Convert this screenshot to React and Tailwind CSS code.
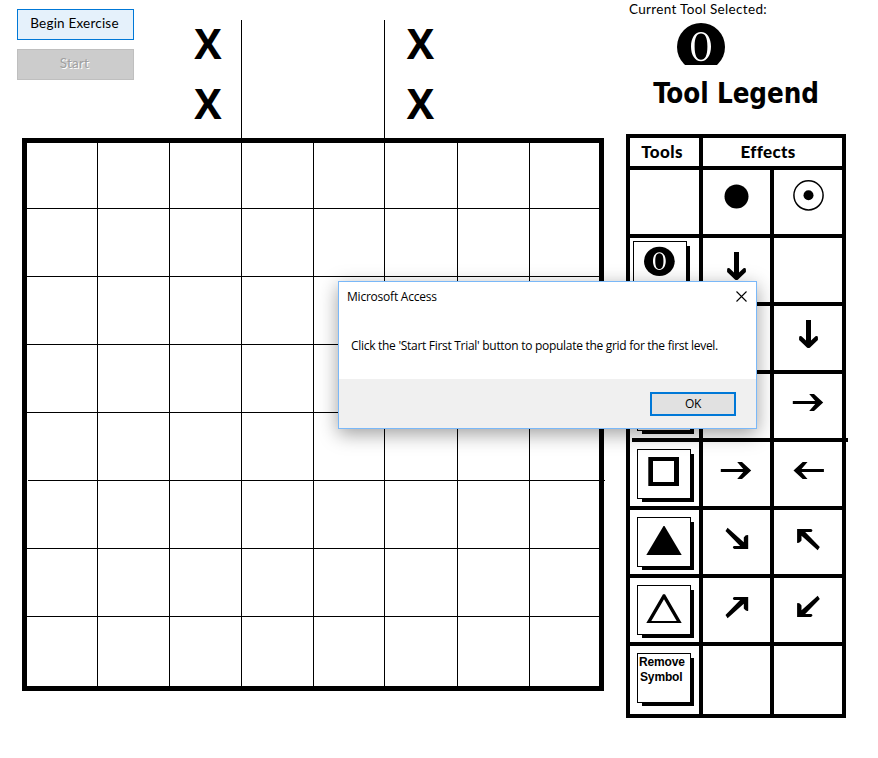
import React from "react";

const COLUMNS = [71, 72, 72, 72, 71, 73, 72, 69];
const ROWS = [66, 68, 68, 68, 68, 68, 68, 69];

function Mark() {
  return (
    <div className="h-[60px] text-center font-['Open_Sans','Noto_Sans',sans-serif] text-[41px] leading-[60px] font-bold">
      <span className="inline-block">X</span>
    </div>
  );
}

function Glyph({ children, w = 67, h = 64 }) {
  return (
    <svg className="block shrink-0" width={w} height={h} viewBox={`0 0 ${w} ${h}`}>
      {children}
    </svg>
  );
}

const Down = ({ x }) => (
  <path
    transform={`translate(${x} 14)`}
    d="M-2.5 0H2.5V20.5L7 16.3Q9.3 15.6 9.4 17.5V20L1.6 27.6Q0 28.6 -1.6 27.6L-9.4 20V17.5Q-9.3 15.6 -7 16.3L-2.5 20.5Z"
  />
);

const Side = ({ x, flip }) => (
  <path
    transform={`translate(${x} 28.5) scale(${flip ? -1 : 1} 1)`}
    d="M-15.2 -1.5H7.2L1.2 -8.5H6L15.2 0L6 8.5H1.2L7.2 1.5H-15.2Z"
  />
);

const Diagonal = ({ x, y, sx = 1, sy = 1 }) => (
  <path
    transform={`translate(${x} ${y}) scale(${sx} ${sy})`}
    d="M-9.3 -10.7L6.9 3.8V-1Q9 -4 11.3 -3.2V10.6H-2.5Q-5.3 9.5 -3 7.7H3.2L-11.4 -7.3Z"
  />
);

function ZeroDisc() {
  return (
    <>
      <circle cx="24" cy="24" r="24" />
      <path
        fill="white"
        fillRule="evenodd"
        d="M24 9C30 9 34 15 34 23.5S30 38.3 24 38.3S14 32 14 23.5S18 9 24 9ZM24 10.6C20 10.6 17.6 14 17.6 23.5S20 36.7 24 36.7S30.4 33 30.4 23.5S28 10.6 24 10.6Z"
      />
    </>
  );
}

function ToolButton({ shifted, children }) {
  return (
    <div
      className={`${shifted ? "mt-[3px] ml-[3px]" : "mt-[7px] ml-[7px]"} h-[50px] w-[54px] border border-black bg-white shadow-[4px_4px_0_-1px_#000]`}
    >
      {children}
    </div>
  );
}

const LEGEND = [
  [
    null,
    <Glyph><circle cx="33.5" cy="26.5" r="12" /></Glyph>,
    <Glyph>
      <circle cx="34.5" cy="25.3" r="14.6" fill="none" stroke="black" strokeWidth="1.5" />
      <circle cx="34.5" cy="25.3" r="5" />
    </Glyph>,
  ],
  [
    <ToolButton shifted>
      <Glyph w={52} h={48}>
        <g transform="translate(10 4.7) scale(.64 .61)"><ZeroDisc /></g>
      </Glyph>
    </ToolButton>,
    <Glyph><Down x={33.5} /></Glyph>,
    null,
  ],
  [<ToolButton />, null, <Glyph><Down x={34.5} /></Glyph>],
  [<ToolButton />, null, <Glyph><Side x={34} /></Glyph>],
  [
    <ToolButton>
      <Glyph w={52} h={48}>
        <path fillRule="evenodd" d="M10.3 7H41V36H10.3ZM15 11V32H36V11Z" />
      </Glyph>
    </ToolButton>,
    <Glyph><Side x={33} /></Glyph>,
    <Glyph><Side x={34.7} flip /></Glyph>,
  ],
  [
    <ToolButton>
      <Glyph w={52} h={48}><path d="M25.5 8H26.5L43.7 37H8.3Z" /></Glyph>
    </ToolButton>,
    <Glyph><Diagonal x={33.9} y={28.4} /></Glyph>,
    <Glyph><Diagonal x={34.4} y={29.6} sx={-1} sy={-1} /></Glyph>,
  ],
  [
    <ToolButton>
      <Glyph w={52} h={48}>
        <path fillRule="evenodd" d="M25 8.2H27L43.7 37H8.3ZM26 13.2L13.3 35H38.7Z" />
      </Glyph>
    </ToolButton>,
    <Glyph><Diagonal x={33.9} y={29.6} sy={-1} /></Glyph>,
    <Glyph><Diagonal x={34.4} y={28.4} sx={-1} /></Glyph>,
  ],
  [
    <ToolButton>
      <div className="pt-px pl-[1px] font-['Liberation_Sans',Arial,sans-serif] text-[12px] leading-[15px] font-bold tracking-[-0.15px]">
        Remove
        <br />
        <span className="pl-px">Symbol</span>
      </div>
    </ToolButton>,
    null,
    null,
  ],
];

function Board() {
  return (
    <div className="relative ml-[22px] h-[553px] w-[582px] border-5 border-black">
      {ROWS.map((h, r) => (
        <div
          key={r}
          className={`flex ${r < 7 ? "border-b border-black" : ""}`}
          style={{ height: h }}
        >
          {COLUMNS.map((w, c) => (
            <div
              key={c}
              className={`h-full shrink-0 ${c < 7 ? "border-r border-black" : ""}`}
              style={{ width: w }}
            />
          ))}
        </div>
      ))}
      <div className="absolute top-[337px] left-0 h-px w-px bg-white" />
      <div className="absolute top-[337px] -right-[6px] h-px w-px bg-black" />
    </div>
  );
}

function Legend() {
  return (
    <div className="relative h-[584px] w-[220px] border-4 border-black">
      <div className="flex h-8 border-b-4 border-black font-['Lato','Carlito',sans-serif] text-[17px] leading-7 font-black">
        <div className="w-[73px] border-r-4 border-black pr-[5px] text-center">
          <span className="tracking-[0.4px]">Tools</span>
        </div>
        <div className="flex-1 pr-[9px] text-center">
          <span className="tracking-[0.3px]">Effects</span>
        </div>
      </div>
      {LEGEND.map((row, r) => (
        <div
          key={r}
          className={`flex h-[68px] ${r < 7 ? "border-b-4 border-black" : ""}`}
        >
          <div className="w-[73px] border-r-4 border-black">{row[0]}</div>
          <div className="w-[71px] border-r-4 border-black">{row[1]}</div>
          <div className="w-[68px]">{row[2]}</div>
        </div>
      ))}
      <div className="absolute top-[300px] left-0 h-1 w-[2px] bg-white" />
      <div className="absolute top-[300px] -right-[6px] h-1 w-[2px] bg-black" />
    </div>
  );
}

function Dialog() {
  return (
    <div className="absolute top-[281px] left-[338px] flex h-[148px] w-[419px] flex-col border border-[#7ab8f8] bg-white font-['Open_Sans','Noto_Sans',sans-serif] text-[12px] shadow-[0_5px_18px_rgba(0,0,0,0.38)]">
      <div className="flex h-[30px] items-center justify-between pr-[9px] pl-2">
        <span className="tracking-[-0.22px]">Microsoft Access</span>
        <svg className="mb-[2px]" width="11" height="11" viewBox="0 0 11 11" stroke="black" strokeWidth="1.1">
          <path d="M.5 .5L10.5 10.5M10.5 .5L.5 10.5" />
        </svg>
      </div>
      <div className="h-[67px] pt-[25px] pl-3 leading-[18px] whitespace-nowrap">
        <span className="tracking-[-0.29px]">
          Click the 'Start First Trial' button to populate the grid for the first level.
        </span>
      </div>
      <div className="flex flex-1 justify-end bg-[#f0f0f0] pt-[13px] pr-5">
        <button className="h-6 w-[86px] border-2 border-[#0078d7] bg-[#e1e1e1] leading-5">
          <span className="tracking-[-0.3px]">OK</span>
        </button>
      </div>
    </div>
  );
}

export default function App() {
  return (
    <div className="relative flex h-[758px] w-[878px] overflow-hidden bg-white text-black">
      <div className="w-[604px] shrink-0">
        <div className="flex h-[138px]">
          <div className="ml-[17px] flex w-[117px] flex-col gap-[9px] pt-[9px] font-['Lato','Carlito',sans-serif] text-[13.5px]">
            <button className="h-[31px] border border-[#0078d7] bg-[#e5f1fb] pr-[2px] pb-[2px]">
              <span className="tracking-[0.2px]">Begin Exercise</span>
            </button>
            <button className="h-[31px] border border-[#bfbfbf] bg-[#ccc] pr-[2px] pb-[2px] text-[#a0a0a0] [text-shadow:1px_1px_0_#fff]">
              <span className="tracking-[0.2px]">Start</span>
            </button>
          </div>
          <div className="ml-[41px] w-[66px] pt-[13px]">
            <Mark />
            <Mark />
          </div>
          <div className="mt-5 w-[144px] border-x border-black" />
          <div className="w-[71px] pt-[13px]">
            <Mark />
            <Mark />
          </div>
        </div>
        <Board />
      </div>
      <div className="ml-[22px] w-[220px] shrink-0">
        <div className="h-[134px]">
          <div className="h-[23px] pl-[3px] font-['Lato','Carlito',sans-serif] text-[13.5px] leading-[19px] whitespace-nowrap">
            <span className="tracking-[0.33px]">Current Tool Selected:</span>
          </div>
          <div className="ml-[51px] h-[42px]">
            <Glyph w={48} h={42}><ZeroDisc /></Glyph>
          </div>
          <div className="pt-[10px] text-center font-['DejaVu_Sans_Condensed','DejaVu_Sans',sans-serif] text-[27.5px] leading-9 font-bold whitespace-nowrap">
            <span className="tracking-[-0.1px]">Tool Legend</span>
          </div>
        </div>
        <Legend />
      </div>
      <Dialog />
    </div>
  );
}
